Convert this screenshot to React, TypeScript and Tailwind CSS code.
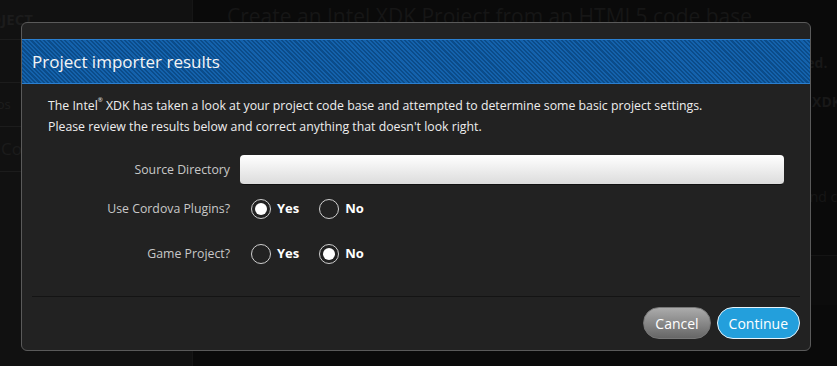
import React from 'react';

const font = { fontFamily: '"Open Sans", "Noto Sans", sans-serif' };

const Radio = ({ checked, label }: { checked: boolean; label: string }) => (
    <label className="flex items-center gap-[6px] cursor-pointer">
        <span className="w-[20px] h-[20px] rounded-full border-[1.5px] border-[#cfcfcf] flex items-center justify-center">
            {checked && <span className="w-[12px] h-[12px] rounded-full bg-white" />}
        </span>
        <span className="text-[13px] font-bold text-white">{label}</span>
    </label>
);

const App = () => {
    return (
        <div className="relative w-[837px] h-[366px] overflow-hidden bg-[#0a0a0a] flex" style={font}>
            {/* background page, dimmed */}
            <div className="w-[193px] shrink-0 h-full bg-[#111111] border-r border-[#161616] flex flex-col overflow-hidden">
                <div className="h-[40px] border-b border-[#1c1c1c] flex items-center">
                    <span className="text-[15px] font-bold text-[#1c1c1c] -ml-[30px]">PROJECT</span>
                </div>
                <div className="h-[43px] border-b border-[#1c1c1c]" />
                <div className="h-[44px] border-b border-[#1c1c1c] flex items-center">
                    <span className="text-[13px] text-[#1e1e1e] -ml-[32px]">Demos</span>
                </div>
                <div className="h-[45px] border-b border-[#1c1c1c] flex items-center">
                    <span className="text-[17px] text-[#1c1c1c] pl-[1px]">Code</span>
                </div>
            </div>
            <div className="flex-1 min-w-0 flex flex-col">
                <div className="h-[40px] pl-[34px] pt-[1px] text-[21px] text-[#161616] whitespace-nowrap">Create an Intel XDK Project from an HTML5 code base</div>
                <div className="pl-[512px] pt-[12px] text-[14px] font-bold text-[#181818] whitespace-nowrap">Project imported.</div>
                <div className="pl-[583px] pt-[18px] text-[14px] font-bold text-[#181818] whitespace-nowrap">Intel XDK</div>
                <div className="pl-[609px] pt-[74px] text-[14px] text-[#161616] whitespace-nowrap">and c</div>
                <div className="ml-[618px] mt-[48px] h-[50px] border-t border-[#141414] bg-[#0c0c0c]" />
            </div>

            {/* modal */}
            <div className="absolute left-[21px] top-[22px] w-[790px] h-[329px] bg-[#222222] border border-[#5a5a5a] rounded-[6px] flex flex-col">
                <div className="mt-[16px] h-[45px] border-y border-[#2a7fd0] bg-[repeating-linear-gradient(45deg,#0b4c8a_0px,#0b4c8a_1.5px,#1462ac_1.5px,#1462ac_3px)] flex items-center pl-[10px]">
                    <h2 className="text-[17px] text-[#f4f4f4]">Project importer results</h2>
                </div>
                <div className="px-[26px] pt-[11px] text-[12.3px] leading-[21px] text-[#eeeeee]">
                    <p>The Intel<sup className="text-[6px] align-super">®</sup> XDK has taken a look at your project code base and attempted to determine some basic project settings.</p>
                    <p>Please review the results below and correct anything that doesn't look right.</p>
                </div>
                <div className="mt-[18px] flex flex-col">
                    <div className="flex items-center">
                        <div className="w-[208px] text-right text-[12.3px] text-[#c8c8c8]">Source Directory</div>
                        <input className="ml-[10px] w-[544px] h-[30px] rounded-[4px] bg-[linear-gradient(#ffffff,#dcdcdc)] border-b border-[#111] outline-none px-2 text-[13px]" />
                    </div>
                    <div className="mt-[11px] flex items-start h-[30px] pt-[4px]">
                        <div className="w-[208px] text-right text-[12.3px] text-[#c8c8c8]">Use Cordova Plugins?</div>
                        <div className="ml-[21px] flex gap-[20px] -mt-[1px]">
                            <Radio checked label="Yes" />
                            <Radio checked={false} label="No" />
                        </div>
                    </div>
                    <div className="mt-[15px] flex items-start h-[30px] pt-[4px]">
                        <div className="w-[208px] text-right text-[12.3px] text-[#c8c8c8]">Game Project?</div>
                        <div className="ml-[21px] flex gap-[20px] -mt-[1px]">
                            <Radio checked={false} label="Yes" />
                            <Radio checked label="No" />
                        </div>
                    </div>
                </div>
                <div className="mx-[10px] mt-[25px] border-t border-[#141414]" />
                <div className="flex justify-end gap-[6px] pr-[10px] pt-[10px]">
                    <button className="h-[32px] px-[11px] rounded-full border border-[#777] bg-[linear-gradient(#ababab,#666666)] text-[14px] text-white">Cancel</button>
                    <button className="h-[32px] px-[11px] rounded-full border border-[#e6f4fc] bg-[#239fdc] text-[14px] text-white">Continue</button>
                </div>
            </div>
        </div>
    );
};

export default App;
